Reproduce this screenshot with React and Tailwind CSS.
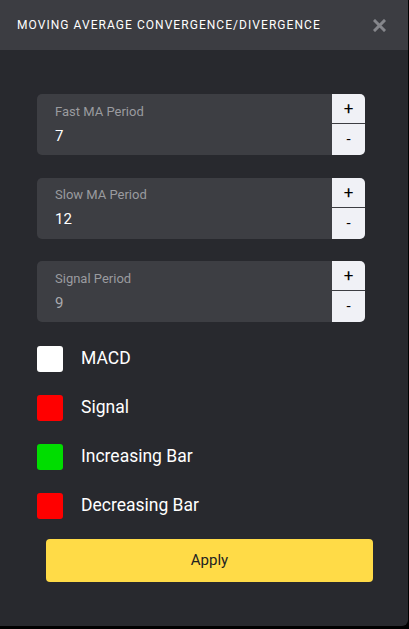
import { useState } from "react";

function NumberField({ label, value, dim }) {
  return (
    <div className="flex h-[61px] rounded-[5px] overflow-hidden bg-[#3d3e43]">
      <div className="flex-1 flex flex-col justify-center pl-[18px]">
        <span className="text-[13px] leading-[16px] text-[#9a9b9f]">{label}</span>
        <span className={`text-[15px] leading-[20px] mt-[6px] ${dim ? "text-[#a9aaae]" : "text-white"}`}>{value}</span>
      </div>
      <div className="w-[33px] flex flex-col bg-[#f0f1f6]">
        <button className="h-[30px] text-[17px] leading-none text-black border-b border-[#3d3e43]">+</button>
        <button className="flex-1 text-[15px] leading-none text-black">-</button>
      </div>
    </div>
  );
}

function ColorRow({ color, label }) {
  return (
    <div className="flex items-center h-[49px]">
      <div className={`w-[26px] h-[26px] rounded-[3px] ${color}`} />
      <span className="ml-[18px] text-[17.5px] text-white">{label}</span>
    </div>
  );
}

export default function App() {
  const [fields] = useState([
    { label: "Fast MA Period", value: "7" },
    { label: "Slow MA Period", value: "12" },
    { label: "Signal Period", value: "9", dim: true },
  ]);

  return (
    <div className="w-[409px] h-[629px] bg-black" style={{ fontFamily: "Roboto, 'Noto Sans', sans-serif" }}>
      <div className="w-[408px] h-[626px] bg-[#28292e] rounded-br-[6px] flex flex-col">
        {/* header */}
        <div className="h-[50px] bg-[#3c3d42] flex items-center justify-between pl-[17px] pr-[22px]">
          <span className="text-[12px] tracking-[1.05px] text-white">
            MOVING AVERAGE CONVERGENCE/DIVERGENCE
          </span>
          <svg width="13" height="13" viewBox="0 0 13 13">
            <path d="M2 2 L11 11 M11 2 L2 11" stroke="#85868b" strokeWidth="3" strokeLinecap="square" />
          </svg>
        </div>

        <div className="pl-[37px] pt-[44px] pr-[43px] flex flex-col gap-[22.5px]">
          {fields.map((f) => (
            <NumberField key={f.label} {...f} />
          ))}
        </div>

        <div className="px-[37px] mt-[12px] flex flex-col">
          <ColorRow color="bg-white" label="MACD" />
          <ColorRow color="bg-[#ff0000]" label="Signal" />
          <ColorRow color="bg-[#00dd00]" label="Increasing Bar" />
          <ColorRow color="bg-[#ff0000]" label="Decreasing Bar" />
        </div>

        <div className="pl-[46px] pr-[35px] mt-[9px]">
          <button className="w-full h-[43px] rounded-[4px] bg-[#ffdb47] text-[#222] text-[15px]">
            Apply
          </button>
        </div>
      </div>
    </div>
  );
}
